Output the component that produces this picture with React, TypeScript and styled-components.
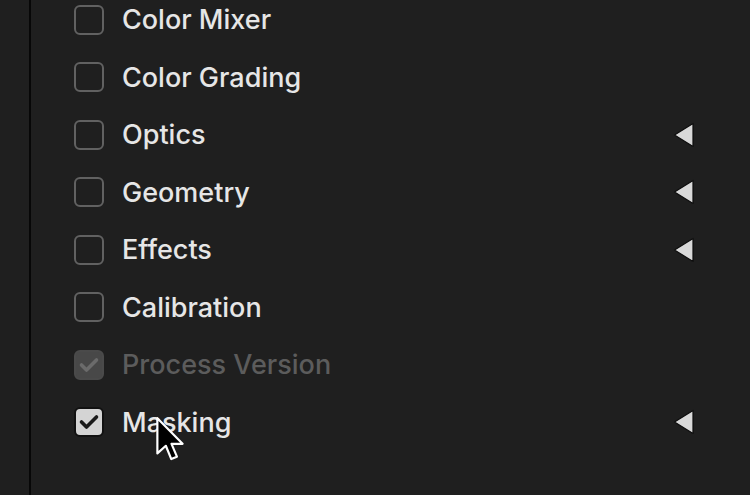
import React from "react";
import styled, { createGlobalStyle } from "styled-components";

const GlobalStyle = createGlobalStyle`
  html, body {
    margin: 0;
    padding: 0;
    background: #1f1f1f;
    overflow: hidden;
  }
  body {
    font-family: Inter, "Liberation Sans", sans-serif;
  }
`;

type Section = {
  label: string;
  state: "off" | "on" | "disabled";
  arrow?: boolean;
};

const sections: Section[] = [
  { label: "Color Mixer", state: "off" },
  { label: "Color Grading", state: "off" },
  { label: "Optics", state: "off", arrow: true },
  { label: "Geometry", state: "off", arrow: true },
  { label: "Effects", state: "off", arrow: true },
  { label: "Calibration", state: "off" },
  { label: "Process Version", state: "disabled" },
  { label: "Masking", state: "on", arrow: true },
];

const App = () => {
  return (
    <>
      <GlobalStyle />
      <Screen>
        <Gutter />
        <Panel>
          <List>
            {sections.map((s) => (
              <Row key={s.label}>
                <Box $state={s.state}>
                  {s.state !== "off" && (
                    <svg width="22" height="18" viewBox="0 0 22 18">
                      <polyline
                        points="3.5,9 8.5,14 18.5,4"
                        fill="none"
                        stroke={s.state === "on" ? "#1a1a1a" : "#6b6b6b"}
                        strokeWidth="3.6"
                        strokeLinecap="round"
                        strokeLinejoin="round"
                      />
                    </svg>
                  )}
                </Box>
                <Label $disabled={s.state === "disabled"}>{s.label}</Label>
                {s.arrow && (
                  <Arrow width="22" height="26" viewBox="0 0 22 26">
                    <path
                      d="M20 1.5 L20 24.5 L1.5 13 Z"
                      fill="#d9d9d9"
                      stroke="#0d0d0d"
                      strokeWidth="1.2"
                      strokeLinejoin="round"
                    />
                  </Arrow>
                )}
              </Row>
            ))}
          </List>
          <Cursor width="33" height="50" viewBox="0 0 15 23">
            <path
              d="M1 1 L1 17.2 L4.9 13.7 L7.4 19.8 L10 18.7 L7.5 12.8 L12.6 12.8 Z"
              fill="#000"
              stroke="#fff"
              strokeWidth="1"
              strokeLinejoin="round"
            />
          </Cursor>
        </Panel>
      </Screen>
    </>
  );
};

export default App;

const Screen = styled.div`
  display: flex;
  width: 750px;
  height: 495px;
  background: #1f1f1f;
`;

const Gutter = styled.div`
  width: 29px;
  flex-shrink: 0;
  border-right: 2px solid #070707;
`;

const Panel = styled.div`
  position: relative;
  flex: 1;
  padding: 0 55px 0 43px;
`;

const List = styled.div`
  display: flex;
  flex-direction: column;
  margin-top: -9px;
`;

const Row = styled.div`
  display: flex;
  align-items: center;
  height: 57.5px;
`;

const Box = styled.div<{ $state: "off" | "on" | "disabled" }>`
  box-sizing: border-box;
  width: 30px;
  height: 30px;
  flex-shrink: 0;
  border-radius: 6px;
  display: flex;
  align-items: center;
  justify-content: center;
  border: 2px solid
    ${(p) => (p.$state === "on" ? "#111" : p.$state === "disabled" ? "#4a4a4a" : "#616161")};
  background: ${(p) =>
    p.$state === "on" ? "#d4d4d4" : p.$state === "disabled" ? "#484848" : "transparent"};
`;

const Label = styled.span<{ $disabled?: boolean }>`
  margin-left: 18px;
  font-size: 27px;
  font-weight: 500;
  color: ${(p) => (p.$disabled ? "#5c5c5c" : "#e6e6e6")};
  flex: 1;
`;

const Arrow = styled.svg`
  flex-shrink: 0;
`;

const Cursor = styled.svg`
  position: absolute;
  left: 124px;
  top: 416px;
`;
